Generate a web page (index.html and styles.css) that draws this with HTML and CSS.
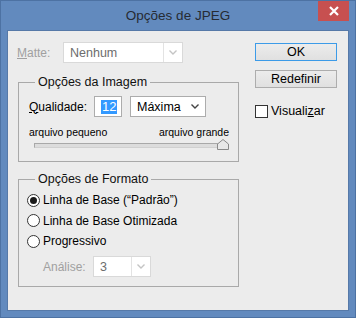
FILE: index.html
```html
<!DOCTYPE html>
<html lang="pt">
  <head>
    <meta charset="UTF-8" />
    <title>Opções de JPEG</title>
    <link rel="stylesheet" href="styles.css">
  </head>
  <body>
    <div class="window">
      <!-- barra de título -->
      <div class="titlebar">
        <span class="title">Opções de JPEG</span>
        <div class="close">
          <svg width="10" height="10" viewBox="0 0 10 10">
            <path d="M1 1 L9 9 M9 1 L1 9" stroke="#fff" stroke-width="2.2" />
          </svg>
        </div>
      </div>

      <div class="client">
        <div class="main">
          <div class="matte-row">
            <span class="matte-label disabled"><u>M</u>atte:</span>
            <div class="combo combo-matte disabled-combo">
              <span class="combo-text">Nenhum</span>
              <span class="combo-arrow split">
                <svg width="8" height="5" viewBox="0 0 8 5"><polyline points="0.5,0.5 4,4 7.5,0.5" fill="none" stroke="#c4c4c4" stroke-width="1.4" /></svg>
              </span>
            </div>
          </div>

          <!-- Opções da Imagem -->
          <fieldset class="group group-image">
            <legend>Opções da Imagem</legend>
            <div class="quality-row">
              <span class="quality-label"><u>Q</u>ualidade:</span>
              <div class="quality-input"><span class="selected">12</span></div>
              <div class="combo combo-quality">
                <span class="combo-text">Máxima</span>
                <span class="combo-arrow">
                  <svg width="8" height="5" viewBox="0 0 8 5"><polyline points="0.5,0.5 4,4 7.5,0.5" fill="none" stroke="#444" stroke-width="1.4" /></svg>
                </span>
              </div>
            </div>
            <div class="range-labels">
              <span>arquivo pequeno</span>
              <span>arquivo grande</span>
            </div>
            <div class="slider">
              <div class="track"></div>
              <svg class="thumb" width="12" height="11" viewBox="0 0 12 11">
                <path d="M0.5 10.5 L0.5 5 L6 0.5 L11.5 5 L11.5 10.5 Z" fill="#e8e8e8" stroke="#8a8a8a" stroke-width="1" />
              </svg>
            </div>
          </fieldset>

          <!-- Opções de Formato -->
          <fieldset class="group group-format">
            <legend>Opções de Formato</legend>
            <div class="radio-row">
              <span class="radio checked"></span>
              <span>Linha de Base (“Padrão”)</span>
            </div>
            <div class="radio-row">
              <span class="radio"></span>
              <span>Linha de Base Otimizada</span>
            </div>
            <div class="radio-row">
              <span class="radio"></span>
              <span>Progressivo</span>
            </div>
            <div class="scan-row">
              <span class="scan-label disabled">Análise:</span>
              <div class="combo combo-scan disabled-combo">
                <span class="combo-text">3</span>
                <span class="combo-arrow split">
                  <svg width="8" height="5" viewBox="0 0 8 5"><polyline points="0.5,0.5 4,4 7.5,0.5" fill="none" stroke="#c4c4c4" stroke-width="1.4" /></svg>
                </span>
              </div>
            </div>
          </fieldset>
        </div>

        <div class="side">
          <div class="button default">OK</div>
          <div class="button">Redefinir</div>
          <div class="check-row">
            <span class="checkbox"></span>
            <span>Visuali<u>z</u>ar</span>
          </div>
        </div>
      </div>
    </div>
  </body>
</html>
```

FILE: styles.css
```css
* {
  margin: 0;
  padding: 0;
  box-sizing: border-box;
}

body {
  width: 356px;
  height: 318px;
  font-family: "Liberation Sans", Arial, sans-serif;
  font-size: 12px;
  color: #000;
  background: #fff;
}

/* janela */
.window {
  width: 356px;
  height: 318px;
  background: #628abe;
  border: 1px solid #4d72a3;
  display: flex;
  flex-direction: column;
}

.titlebar {
  height: 29px;
  display: grid;
  grid-template-columns: 1fr auto 1fr;
  align-items: start;
}

.title {
  grid-column: 2;
  font-size: 13.5px;
  line-height: 29px;
  color: #262b33;
}

.close {
  grid-column: 3;
  justify-self: end;
  width: 31px;
  height: 20px;
  margin-right: 6px;
  background: #c75050;
  display: flex;
  align-items: center;
  justify-content: center;
}

.client {
  flex: 1;
  margin: 0 6px 6px;
  background: #ececec;
  border: 1px solid #5679a8;
  display: grid;
  grid-template-columns: 247px 82px;
  align-items: start;
}

.main {
  padding-left: 10px;
}

.disabled {
  color: #a0a0a0;
}

/* Matte */
.matte-row {
  margin-top: 11px;
  height: 21px;
  display: flex;
  align-items: center;
}

.matte-label {
  width: 46px;
  margin-left: -1px;
}

/* caixas de combinação */
.combo {
  height: 21px;
  background: #fff;
  border: 1px solid #acacac;
  display: flex;
  align-items: center;
}

.combo-text {
  flex: 1;
  padding-left: 6px;
  font-size: 12.5px;
}

.combo-arrow {
  width: 19px;
  height: 100%;
  display: flex;
  align-items: center;
  justify-content: center;
}

.combo-arrow.split {
  border-left: 1px solid #e3e3e3;
}

.disabled-combo {
  border-color: #d9d9d9;
}

.disabled-combo .combo-text {
  color: #6d6d6d;
}

.combo-matte {
  width: 120px;
}

.combo-quality {
  width: 76px;
  margin-left: 8px;
}

.combo-quality .combo-arrow {
  width: 20px;
}

.combo-scan {
  width: 58px;
}

/* grupos */
.group {
  width: 221px;
  border: 1px solid #a9a9a9;
  padding: 0 9px 0 10px;
}

.group legend {
  font-size: 12.5px;
  line-height: 16px;
  margin-left: 6px;
  padding: 0 3px;
  color: #111;
}

.group-image {
  margin-top: 11px;
  padding-top: 6px;
  padding-bottom: 11px;
}

.quality-row {
  height: 21px;
  display: flex;
  align-items: center;
}

.quality-label {
  width: 65px;
}

.quality-input {
  width: 28px;
  height: 21px;
  background: #fff;
  border: 1px solid #acacac;
  padding-left: 6px;
  display: flex;
  align-items: center;
}

.selected {
  background: #3399ff;
  color: #fff;
  font-size: 13px;
  line-height: 14px;
  padding: 0 1px;
}

.range-labels {
  margin-top: 9px;
  font-size: 10.5px;
  line-height: 13px;
  display: flex;
  justify-content: space-between;
}

.slider {
  height: 11px;
  padding-left: 5px;
  display: flex;
  align-items: center;
}

.track {
  flex: 1;
  height: 5px;
  margin-top: 1px;
  background: #dcdcdc;
  border: 1px solid #a8a8a8;
  border-bottom-color: #d0d0d0;
}

.thumb {
  margin-left: -11px;
}

.group-format {
  margin-top: 9px;
  padding-top: 3px;
  padding-bottom: 9px;
}

.radio-row {
  height: 20.5px;
  display: flex;
  align-items: center;
  gap: 3px;
  font-size: 12px;
}

.radio {
  width: 13px;
  height: 13px;
  margin-left: -2px;
  border: 1px solid #333;
  border-radius: 50%;
  background: #fff;
  display: flex;
  align-items: center;
  justify-content: center;
}

.radio.checked::after {
  content: "";
  width: 7px;
  height: 7px;
  border-radius: 50%;
  background: #1a1a1a;
}

.scan-row {
  margin-top: 4.5px;
  height: 21px;
  display: flex;
  align-items: center;
}

.scan-label {
  width: 50px;
  margin-left: 14px;
}

/* coluna dos botões */
.side {
  padding-top: 12px;
  display: flex;
  flex-direction: column;
}

.button {
  height: 18px;
  background: linear-gradient(#ececec, #e0e0e0);
  border: 1px solid #adadad;
  display: flex;
  align-items: center;
  justify-content: center;
  font-size: 12.5px;
}

.button + .button {
  margin-top: 9px;
}

.button.default {
  border-color: #3c9be8;
}

.check-row {
  margin-top: 16px;
  display: flex;
  align-items: center;
  gap: 3px;
  font-size: 12.5px;
}

.checkbox {
  width: 13px;
  height: 13px;
  background: #fff;
  border: 1px solid #333;
}
```
